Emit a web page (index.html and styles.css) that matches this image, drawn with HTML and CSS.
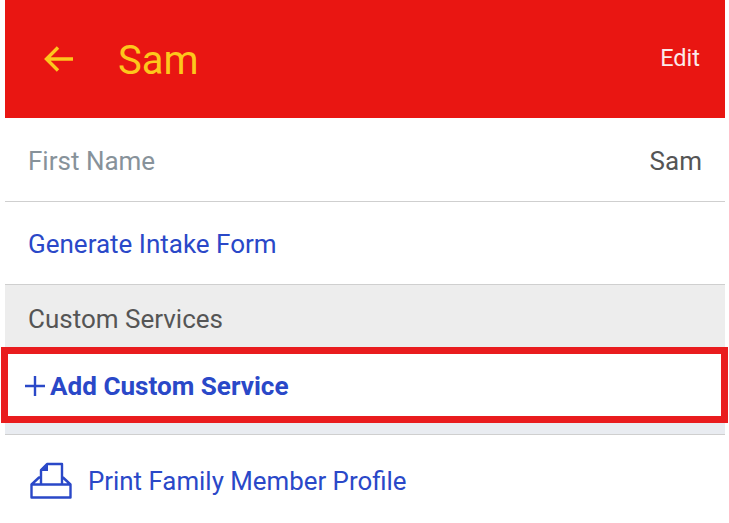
FILE: index.html
```html
<!DOCTYPE html>
<html lang="en">
<head>
<meta charset="utf-8">
<title>Sam</title>
<link rel="stylesheet" href="styles.css">
</head>
<body>
<main class="screen">
  <header class="topbar">
    <svg class="back" width="34" height="32" viewBox="0 0 34 32" aria-hidden="true"><path d="M31 16H4M16 4.500 4.500 16 16 27.500" fill="none" stroke="#fdc71c" stroke-width="3.400"/></svg>
    <h1 class="title">Sam</h1>
    <span class="edit">Edit</span>
  </header>
  <div class="row row-field">
    <span class="label">First Name</span>
    <span class="value">Sam</span>
  </div>
  <div class="row row-link"><a class="link">Generate Intake Form</a></div>
  <div class="section-head">Custom Services</div>
  <div class="add-row">
    <svg class="plus" width="22" height="22" viewBox="0 0 22 22" aria-hidden="true"><path d="M11 1v20M1 11h20" fill="none" stroke="#2a48c8" stroke-width="2.400"/></svg>
    <span class="add-text">Add Custom Service</span>
  </div>
  <div class="spacer"></div>
  <div class="print-row">
    <svg class="printer" width="44" height="38" viewBox="0 0 44 38" aria-hidden="true"><path d="M12 15.500H10L2.500 22.500V35.500H41.500V22.500L34 15.500H33M2.500 22.500H41.500M12 22.500V8L18 2H33V22.500" fill="none" stroke="#2a48c8" stroke-width="2.400" stroke-linejoin="round"/><path d="M12 9 19 2V9Z" fill="#2a48c8"/></svg>
    <a class="link link-print">Print Family Member Profile</a>
  </div>
  <div class="highlight"></div>
</main>
</body>
</html>
```
FILE: styles.css
```css
* { box-sizing: border-box; }
html, body { margin: 0; padding: 0; background: #fff; }
body { width: 729px; height: 523px; overflow: hidden; font-family: Roboto, "Liberation Sans", sans-serif; }
.screen { position: relative; width: 720px; margin-left: 5px; height: 523px; }
.topbar { height: 118px; background: #e91612; display: flex; align-items: center; padding: 0 25px 0 37px; color: #fdc71c; }
.back { flex: none; }
.title { margin: 4px 0 0 42px; font-size: 40px; font-weight: 400; flex: 1; line-height: 1; }
.edit { color: #fbeaea; font-size: 23.500px; margin-bottom: 2px; }
.row { height: 83px; border-bottom: 1px solid #cfcfcf; display: flex; align-items: center; justify-content: space-between; padding: 2px 23px 0 23px; font-size: 26px; }
.label { color: #87929a; }
.value { color: #555; }
.link { color: #2a48c8; font-size: 26px; }
.link-print { font-size: 25.850px; }
.row-field { margin-top: 1px; }
.section-head { height: 62px; padding: 19px 23px 0; background: #ededed; color: #555; font-size: 26px; line-height: 30px; }
.add-row { height: 76px; display: flex; align-items: center; padding: 2px 0 0 19px; }
.plus { flex: none; margin-right: 4px; }
.add-text { color: #2a48c8; font-size: 26.100px; font-weight: 700; }
.spacer { height: 12px; background: #e9ecf1; border-bottom: 1px solid #cfcfcf; }
.print-row { display: flex; align-items: center; height: 88px; padding: 4px 0 0 24px; }
.printer { flex: none; margin-right: 15px; }
.highlight { position: absolute; left: -4px; top: 347px; width: 727px; height: 76px; border: 7px solid #e91c1e; }
```
